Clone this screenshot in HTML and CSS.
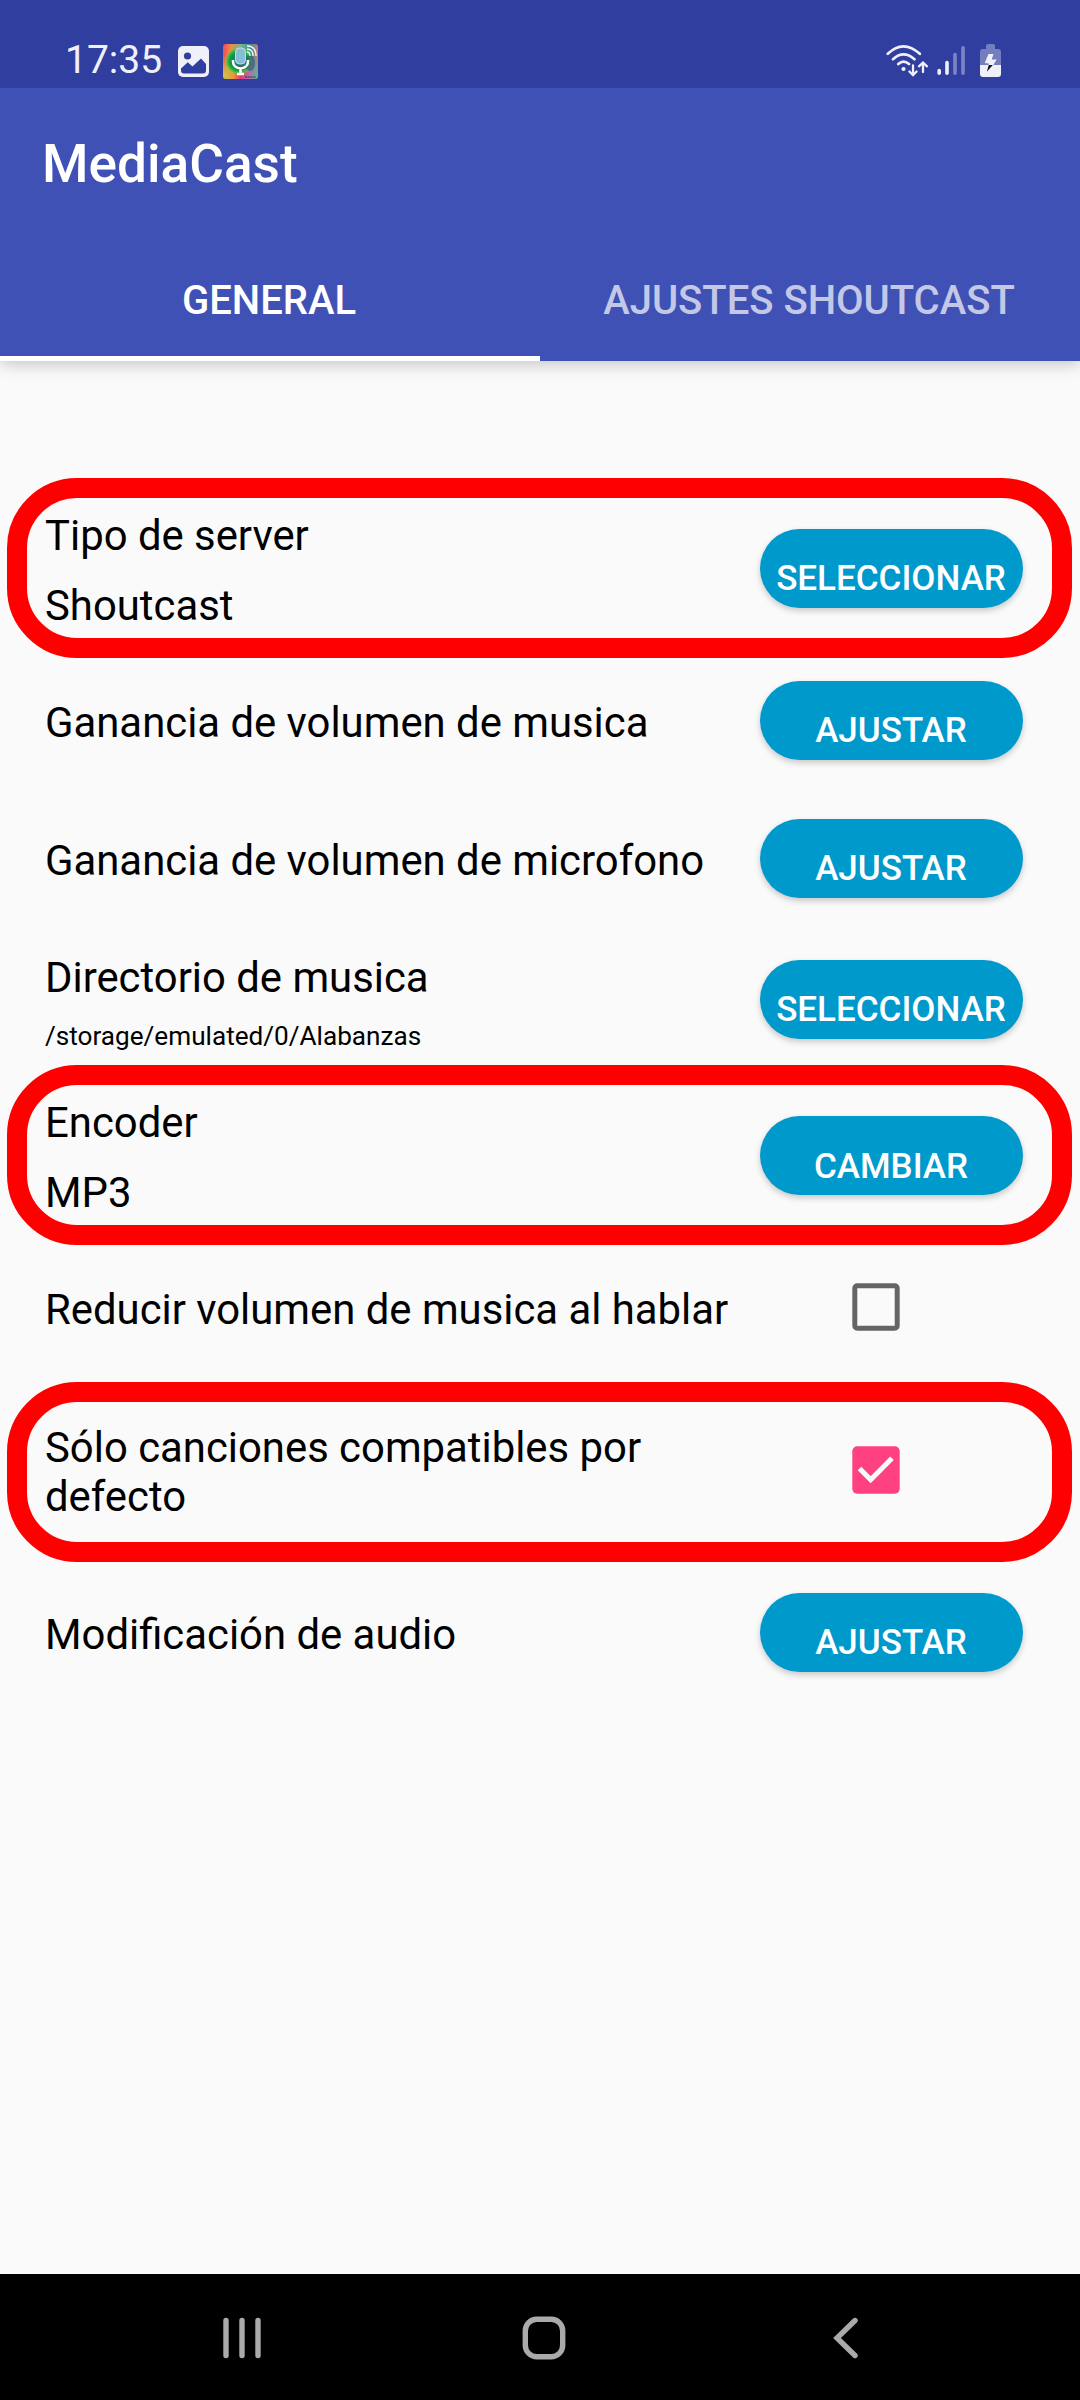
FILE: index.html
```html
<!DOCTYPE html>
<html lang="es">
<head>
<meta charset="utf-8">
<title>MediaCast</title>
<link rel="stylesheet" href="styles.css">
</head>
<body>
<div class="status">
  <span class="clock">17:35</span>
  <svg class="photo" width="31" height="31" viewBox="0 0 31 31"><rect width="31" height="31" rx="5" fill="#f0f0fa"/><circle cx="9.5" cy="10" r="3.6" fill="#303f9f"/><path d="M3 22.5l6.800-6.300 4.600 4.400 8.600-8 5 5.400v6.500q0 3-3 3H6q-3 0-3-3z" fill="#303f9f"/></svg>
  <svg class="cast" width="35" height="35" viewBox="0 0 35 35">
    <defs>
      <linearGradient id="top" x1="0" y1="0" x2="1" y2="0"><stop offset="0" stop-color="#ee4b5c"/><stop offset=".22" stop-color="#f08a4b"/><stop offset=".5" stop-color="#79b58c"/><stop offset=".8" stop-color="#3f908b"/><stop offset="1" stop-color="#d07a78"/></linearGradient>
      <linearGradient id="low" x1="0" y1="0" x2="1" y2="0"><stop offset="0" stop-color="#c6c94b"/><stop offset=".3" stop-color="#e9963d"/><stop offset=".5" stop-color="#e23a6c"/><stop offset=".75" stop-color="#b86da9"/><stop offset="1" stop-color="#54b79a"/></linearGradient>
      <linearGradient id="fade" x1="0" y1="0" x2="0" y2="1"><stop offset=".3" stop-color="#000"/><stop offset=".85" stop-color="#fff"/></linearGradient>
      <mask id="m"><rect width="35" height="35" fill="url(#fade)"/></mask>
      <radialGradient id="core"><stop offset="0" stop-color="#177d78"/><stop offset=".6" stop-color="#138b5d"/><stop offset=".82" stop-color="#2cc431"/><stop offset="1" stop-color="#a5c936" stop-opacity="0"/></radialGradient>
    </defs>
    <rect width="35" height="35" rx="3" fill="url(#top)"/>
    <rect width="35" height="35" rx="3" fill="url(#low)" mask="url(#m)"/>
    <circle cx="16" cy="17" r="14" fill="url(#core)"/>
    <ellipse cx="27" cy="19" rx="5" ry="8" fill="#315a80" opacity=".65"/>
    <rect x="12.500" y="4" width="10" height="16" rx="4" fill="#83bdd6" stroke="#d6ebf4" stroke-width=".8"/>
    <path d="M10 16v1.500c0 9 15 9 15 0V16M17.500 24v5.500M14 30h7" fill="none" stroke="#fff" stroke-width="2.600"/>
    <path d="M14 21q3.500 3 7 0" fill="none" stroke="#724b7b" stroke-width="1.500"/>
    <path d="M24 8q3 0 3 4M24 5q6 0 6 7M24 2q9 0 9 10" fill="none" stroke="#eef6f6" stroke-width="1.400"/>
    <path d="M22 33h11" stroke="#263054" stroke-width="1" stroke-dasharray="2 .6"/>
  </svg>
  <svg class="signals" width="116" height="34" viewBox="0 0 116 34">
    <g fill="none" stroke="#f0f0fa" stroke-linecap="round">
      <path d="M1.800 9.800q15.400-15 32 0M7 15.200q10.400-9.600 21.500 0M12.300 20q5.200-4.600 10.700 0" stroke-width="2.700"/>
      <path d="M27 21.500v9M23.400 27.500l3.600 3.700 3.600-3.700M37 28v-9M33 22.300l4-3.800 4 3.800" stroke-width="2.300"/>
      <path d="M53.200 26.500v2.700M61 18.500v10.700" stroke-width="3.600"/>
      <path d="M69 10.500v18.700M77 3.800v25.400" stroke-width="3.600" opacity=".4"/>
    </g>
    <circle cx="17.500" cy="25" r="2.100" fill="#f0f0fa"/>
    <path d="M100 5V2q0-2 2-2h5q2 0 2 2v3h3q3 0 3 3v13H94V8q0-3 3-3z" fill="#747dbd"/>
    <path d="M94 21h21v9q0 3-3 3H97q-3 0-3-3z" fill="#f0f0fa"/>
    <path d="M102.500 10h5l-1.800 5.500h5L107.300 21h-4.600v-1.500l-4-.5z" fill="#f0f0fa"/>
    <path d="M102.800 21h4l-6 6.800z" fill="#111"/>
  </svg>
</div>
<header class="header">
  <h1 class="title">MediaCast</h1>
  <nav class="tabs">
    <span class="tab active">GENERAL</span>
    <span class="tab">AJUSTES SHOUTCAST</span>
  </nav>
</header>
<main class="settings">
  <section class="row server">
    <div class="label"><p>Tipo de server</p><p class="value">Shoutcast</p></div>
    <button class="button">SELECCIONAR</button>
    <div class="frame"></div>
  </section>
  <section class="row single">
    <div class="label"><p>Ganancia de volumen de musica</p></div>
    <button class="button">AJUSTAR</button>
  </section>
  <section class="row single">
    <div class="label"><p>Ganancia de volumen de microfono</p></div>
    <button class="button">AJUSTAR</button>
  </section>
  <section class="row directory">
    <div class="label"><p>Directorio de musica</p><p class="path">/storage/emulated/0/Alabanzas</p></div>
    <button class="button">SELECCIONAR</button>
  </section>
  <section class="row encoder">
    <div class="label"><p>Encoder</p><p class="value">MP3</p></div>
    <button class="button">CAMBIAR</button>
    <div class="frame"></div>
  </section>
  <section class="row single">
    <div class="label"><p>Reducir volumen de musica al hablar</p></div>
    <div class="check"><svg width="48" height="48" viewBox="0 0 48 48"><rect x="2.800" y="2.800" width="42.400" height="42.400" rx="2.500" fill="none" stroke="#656565" stroke-width="5"/></svg></div>
  </section>
  <section class="row compatible">
    <div class="label"><p>Sólo canciones compatibles por defecto</p></div>
    <div class="check"><svg width="48" height="48" viewBox="0 0 48 48"><rect x=".3" y=".3" width="47.400" height="47.400" rx="5" fill="#ff4081"/><path d="M7.500 22.500l11.200 11.300L40 12.300" fill="none" stroke="#fafafa" stroke-width="5"/></svg></div>
    <div class="frame"></div>
  </section>
  <section class="row audio">
    <div class="label"><p>Modificación de audio</p></div>
    <button class="button">AJUSTAR</button>
  </section>
</main>
<footer class="navbar">
  <svg width="38" height="42" viewBox="0 0 38 42"><path d="M3 3.500v35M19 3.500v35M35 3.500v35" stroke="#aaa" stroke-width="5.400" stroke-linecap="round"/></svg>
  <svg class="home" width="44" height="44" viewBox="0 0 44 44"><rect x="3.300" y="3.300" width="37.400" height="37.400" rx="11.500" fill="none" stroke="#aaa" stroke-width="5.400"/></svg>
  <svg width="26" height="42" viewBox="0 0 26 42"><path d="M22 3.500L4 21l18 17.500" fill="none" stroke="#aaa" stroke-width="5.400" stroke-linecap="round"/></svg>
</footer>
</body>
</html>
```
FILE: styles.css
```css
* { box-sizing: border-box; }
body {
  margin: 0;
  width: 1080px;
  height: 2400px;
  display: flex;
  flex-direction: column;
  background: #fafafa;
  color: #000;
  font-family: Roboto, sans-serif;
  overflow: hidden;
}
p, h1 { margin: 0; }
svg { display: block; flex: none; }

.status {
  position: relative;
  z-index: 1;
  height: 88px;
  padding: 0 78px 0 65px;
  display: flex;
  align-items: flex-start;
  background: #303f9f;
  color: #f0f0fa;
}
.clock {
  width: 113px;
  padding-top: 37px;
  font-size: 39px;
  line-height: 47px;
  white-space: nowrap;
}
.photo { margin-top: 46px; }
.cast { margin: 44px 0 0 14px; }
.signals { margin: 44px 0 0 auto; }

.header {
  position: relative;
  height: 273px;
  background: #3f51b5;
  color: #fff;
  box-shadow: 0 3px 16px rgba(0, 0, 0, .22);
}
.title {
  height: 157px;
  padding: 45px 0 0 42px;
  font-size: 53.2px;
  line-height: 62px;
  font-weight: 500;
}
.tabs { display: flex; height: 116px; }
.tab {
  flex: 1;
  padding: 32px 2px 0 0;
  border-bottom: 5px solid transparent;
  font-size: 40px;
  line-height: 48px;
  font-weight: 500;
  text-align: center;
  color: rgba(255, 255, 255, .7);
}
.tab.active { color: #fff; border-color: #fff; }

.settings { flex: 1; padding-top: 128px; }
.row {
  position: relative;
  display: flex;
  align-items: center;
  justify-content: space-between;
  height: 138px;
  padding: 0 57px 0 45px;
}
.server { height: 164px; }
.directory { height: 146px; }
.encoder { height: 165px; }
.compatible { height: 188px; }
.label {
  width: 690px;
  font-size: 41.850px;
  line-height: 49.2px;
}
.single .label { padding-top: 2px; }
.value { margin-top: 20.800px; }
.path {
  margin-top: 19px;
  font-size: 26.150px;
  line-height: 30.500px;
}
.compatible .label { width: 640px; }
.button {
  width: 263px;
  height: 79px;
  margin: 0 0 4px;
  padding: 21px 1px 0 0;
  border: 0;
  border-radius: 40px;
  background: #0099cc;
  box-shadow: 0 3px 6px rgba(0, 0, 0, .2);
  color: #fff;
  font: 500 35px/41px Roboto, sans-serif;
  white-space: nowrap;
}
.server .button,
.directory .button,
.audio .button { margin-bottom: 6px; }
.check { width: 171px; margin-bottom: 4px; }
.frame {
  position: absolute;
  left: 7px;
  top: -11px;
  width: 1065px;
  height: 180px;
  border: 20px solid #f00;
  border-radius: 70px;
}
.encoder .frame { top: -10px; }
.compatible .frame { top: 4px; }

.navbar {
  height: 126px;
  padding: 2px 221px 0 223px;
  display: flex;
  align-items: center;
  justify-content: space-between;
  background: #000;
}
.home { margin-right: 7px; }
```
